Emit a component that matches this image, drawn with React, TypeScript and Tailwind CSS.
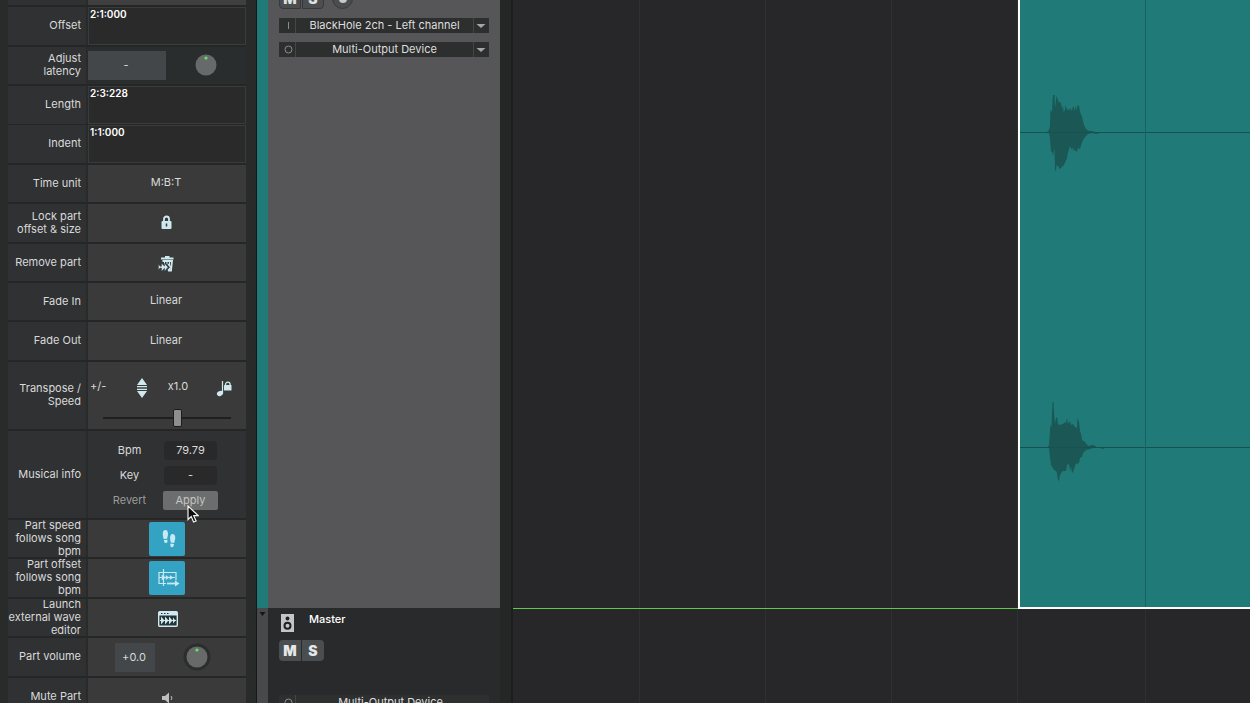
import { ReactNode, useState } from 'react';

const GRID_CELLS = [0, 1, 2, 3];

const CHANNEL_WAVES = [
  'M0 60 H27 L29 58 L30 54 L30.500 38 L32 40 L33 23 L34.500 23 L35 37 L36.500 24 L38 28 L39 31 L40 30 L41 31 L42 37 L43 34 L43.500 40 L45 38 L45.500 33 L47 38 L48 37 L49 39 L50 36 L52 39 L53 34 L54 36 L55 40 L55.500 34 L57 38 L57.500 33 L59 34 L60 40 L62 45 L64 53 L66 57 L69 59 L72 59 L75 60 L86 60 L86 61 L80 61 L76 62 L72 61 L68 62 L65 65 L62 70 L60 77 L58 76 L57 80 L55 78 L54 79 L53 75 L52 78 L50 74 L49 77 L48 80 L47 86 L44 93 L42 95 L40 97 L38 94 L36.500 93 L36 99 L35 98 L34.500 76 L33 84 L32 79 L31 80 L30 66 L29 61 Z',
  'M0 60 H28 L29 58 L30 44 L30.500 38 L31.500 40 L32 28 L32.500 15 L33.500 15 L34 26 L35 37 L36 31 L37 30 L38 37 L40 38 L43 37 L45 35 L46 36 L47 31 L48 37 L50 34 L51 38 L53 37 L55 40 L57 41 L57.500 31 L59 35 L60 44 L61 47 L62 53 L65 55 L68 59 L73 58 L77 60 L86 60 L83 62 L80 61 L73 61 L70 62 L66 63 L63 66 L62 70 L60 71 L59 76 L57 77 L56 76 L53 85 L52 86 L51 79 L50 84 L49 77 L47 78 L46 84 L43 84 L41 86 L40 88 L39 94 L38 93 L37 86 L36 84 L34 83 L31 78 L30 70 L29 61 Z',
];

function Row({ label, size, children }: { label: string; size: string; children: ReactNode }) {
  return (
    <div className={`grid grid-cols-[78px_1fr] gap-x-0.5 border-b-2 border-[#252626] ${size}`}>
      <div className="flex min-h-0 items-center justify-end bg-[#303133] pr-[5px] pb-px text-right leading-[13px]">
        {label}
      </div>
      {children}
    </div>
  );
}

function TimeField({ label, value }: { label: string; value: string }) {
  const [text, setText] = useState(value);
  return (
    <input
      aria-label={label}
      value={text}
      onChange={(e) => setText(e.target.value)}
      className="h-full w-full min-w-0 border border-[#3a3b3b] bg-[#2a2a2a] px-px pb-6 text-[10px] leading-3 font-semibold text-white outline-none"
    />
  );
}

function CellButton({ label, children }: { label: string; children: ReactNode }) {
  return (
    <button aria-label={label} className="flex items-center justify-center bg-[#3a3a3a] pr-0.5 pb-0.5">
      {children}
    </button>
  );
}

function Knob({ label, ring }: { label: string; ring: boolean }) {
  return (
    <button aria-label={label} className="size-7">
      <svg viewBox="0 0 28 28" className="size-7">
        {ring && <circle cx="14" cy="14" r="13.5" fill="#2c2d2d" />}
        <circle cx="14" cy="14" r="10.5" fill="#686a6a" />
        <circle cx="14" cy="7" r="1.6" fill="#62e36b" />
      </svg>
    </button>
  );
}

function DeviceSelect({ mark, device, faded }: { mark: 'I' | 'O'; device: string; faded?: boolean }) {
  return (
    <div
      className={`grid h-[15px] grid-cols-[17px_1fr_16px] items-center ${faded ? 'bg-[#2e2f2f]' : 'bg-[#2d2e2e]'}`}
    >
      <svg viewBox="0 0 17 15" className="h-[15px] w-[17px]" fill="none" stroke="#8b8c8c">
        {mark === 'I' ? <path d="M9.500 4v7" /> : <circle cx="9.500" cy="7.500" r="3.500" />}
        <path d="M16.500 0v15" stroke="#444545" />
      </svg>
      <select
        aria-label={mark === 'I' ? 'Input' : 'Output'}
        className={`h-[15px] w-full appearance-none text-center text-[11px] leading-[15px] text-[#dedede] outline-none [text-align-last:center] ${faded ? 'pl-3' : ''}`}
      >
        <option>{device}</option>
      </select>
      {!faded && (
        <svg viewBox="0 0 16 15" className="h-[15px] w-4">
          <path d="M.5 0v15" stroke="#444545" />
          <path d="M3.500 6h9l-4.500 4z" fill="#a5a6a6" />
        </svg>
      )}
    </div>
  );
}

function MuteSolo({ tone }: { tone: string }) {
  return (
    <div className="flex gap-px">
      <button aria-label="Mute" className={`h-[21px] w-[22px] rounded-l text-sm leading-[19px] font-black ${tone}`}>
        M
      </button>
      <button aria-label="Solo" className={`h-[21px] w-[22px] rounded-r text-sm leading-[19px] font-black ${tone}`}>
        S
      </button>
    </div>
  );
}

function Inspector() {
  const [speed, setSpeed] = useState(59);
  const [bpm, setBpm] = useState('79.79');
  const [key, setKey] = useState('-');

  return (
    <aside className="w-[257px] shrink-0 overflow-hidden border-r border-[#171818] pr-2.5 pl-2">
      <div className="grid h-[7px] grid-cols-[78px_1fr] gap-x-0.5 border-b-2 border-[#252626]">
        <div className="bg-[#303133]" />
        <div className="bg-[#3f3f3f]" />
      </div>

      <Row label="Offset" size="h-10">
        <TimeField label="Offset" value="2:1:000" />
      </Row>
      <Row label="Adjust latency" size="h-[39px]">
        <div className="grid grid-cols-[78px_1fr] items-center bg-[#2a2d2e] pb-px">
          <button aria-label="Latency" className="h-[29px] bg-[#43474a] pr-0.5">
            -
          </button>
          <div className="flex justify-center">
            <Knob label="Latency knob" ring={false} />
          </div>
        </div>
      </Row>
      <Row label="Length" size="h-[39px]">
        <TimeField label="Length" value="2:3:228" />
      </Row>
      <Row label="Indent" size="h-10">
        <TimeField label="Indent" value="1:1:000" />
      </Row>
      <Row label="Time unit" size="h-[39px]">
        <CellButton label="Time unit">M:B:T</CellButton>
      </Row>
      <Row label="Lock part offset & size" size="h-10">
        <CellButton label="Lock part">
          <svg viewBox="0 0 11 14" className="h-3.5 w-[11px]">
            <path d="M3 7V4a2.500 2.500 0 0 1 5 0v3" fill="none" stroke="#cfe9ee" strokeWidth="1.800" />
            <rect x=".5" y="6" width="10" height="8" rx="1" fill="#cfe9ee" />
            <path d="M5.500 8.500v3" stroke="#3a3a3a" strokeWidth="1.500" />
          </svg>
        </CellButton>
      </Row>
      <Row label="Remove part" size="h-[39px]">
        <CellButton label="Remove part">
          <svg viewBox="0 0 16 16" className="mt-1 size-4">
            <path d="M3 2.500h12.500M7 1h4.500" stroke="#cfe9ee" strokeWidth="2" />
            <path d="M4.500 5h9.500l-1 9.500h-3" fill="none" stroke="#cfe9ee" strokeWidth="1.800" />
            <path d="M6.500 5v3M9 5v3M11.500 5v4" stroke="#cfe9ee" />
            <path d="M.5 8v6l1.500-2h1.500v3.200l3-3v3l3.500-4-3.500-4v3l-3-3v3H2z" fill="#cfe9ee" stroke="#2c3234" strokeWidth=".4" />
            <path d="M10 8l3 3.200-3 3.200" fill="none" stroke="#cfe9ee" strokeWidth="1.500" />
          </svg>
        </CellButton>
      </Row>
      <Row label="Fade In" size="h-[39px]">
        <CellButton label="Fade In">Linear</CellButton>
      </Row>
      <Row label="Fade Out" size="h-10">
        <CellButton label="Fade Out">Linear</CellButton>
      </Row>

      <Row label="Transpose / Speed" size="h-[69px]">
        <div className="flex flex-col bg-[#3a3a3a] pt-3">
          <div className="grid h-6 grid-cols-[32px_44px_28px_1fr] items-center">
            <span className="pl-0.5">+/-</span>
            <button aria-label="Transpose steps" className="flex justify-center pt-1">
              <svg viewBox="0 0 10 20" className="h-5 w-2.5" fill="#cfe9ee">
                <path d="M5 0l5 7H0zM5 20l5-7H0z" />
                <path d="M0 8h10v1.200H0zM0 10.800h10v1.200H0z" />
              </svg>
            </button>
            <span className="text-center">x1.0</span>
            <button aria-label="Keep pitch" className="flex justify-end pt-1 pr-3.5">
              <svg viewBox="0 0 16 17" className="h-[17px] w-4">
                <path d="M6.500 1v12" stroke="#cfe9ee" strokeWidth="1.200" />
                <ellipse cx="4" cy="13.500" rx="3.200" ry="2.500" transform="rotate(-25 4 13.500)" fill="#cfe9ee" />
                <path d="M9.500 6V4.500a2.300 2.300 0 0 1 4.600 0V6" fill="none" stroke="#cfe9ee" strokeWidth="1.300" />
                <rect x="8" y="5" width="7.500" height="5.500" rx=".5" fill="#cfe9ee" />
              </svg>
            </button>
          </div>
          <input
            type="range"
            aria-label="Speed"
            value={speed}
            onChange={(e) => setSpeed(Number(e.target.value))}
            className="mx-auto mt-2.5 h-5 w-32 appearance-none bg-transparent [&::-webkit-slider-runnable-track]:h-0.5 [&::-webkit-slider-runnable-track]:bg-[#1f1f1f] [&::-webkit-slider-thumb]:-mt-2 [&::-webkit-slider-thumb]:h-[18px] [&::-webkit-slider-thumb]:w-[9px] [&::-webkit-slider-thumb]:appearance-none [&::-webkit-slider-thumb]:rounded-xs [&::-webkit-slider-thumb]:border [&::-webkit-slider-thumb]:border-[#1c1c1c] [&::-webkit-slider-thumb]:bg-[#8e8e8e]"
          />
        </div>
      </Row>

      <Row label="Musical info" size="h-[89px]">
        <div className="grid grid-cols-[55px_55px] content-center justify-center gap-x-1.5 gap-y-1.5 bg-[#303133] pt-0.5 pr-3.5 text-center leading-[19px]">
          <label htmlFor="bpm">Bpm</label>
          <input
            id="bpm"
            value={bpm}
            onChange={(e) => setBpm(e.target.value)}
            className="mx-auto h-[19px] w-[53px] rounded-sm bg-[#29292a] text-center outline-none"
          />
          <label htmlFor="key">Key</label>
          <input
            id="key"
            value={key}
            onChange={(e) => setKey(e.target.value)}
            className="mx-auto h-[19px] w-[53px] rounded-sm bg-[#29292a] text-center outline-none"
          />
          <button className="text-[#9a9b9b]">Revert</button>
          <div className="relative">
            <button className="h-[19px] w-full rounded-xs bg-[#6c6d6d] text-[#c4c4c4]">Apply</button>
            {/* Pointer */}
            <svg viewBox="0 0 12 18" className="pointer-events-none absolute top-3.5 left-6 h-[18px] w-3">
              <path
                d="M1 1v13.500l3.200-3 2.400 5.500 2.500-1-2.400-5.300h4.600z"
                fill="#0b0b0b"
                stroke="#f2f2f2"
                strokeWidth="1.200"
              />
            </svg>
          </div>
        </div>
      </Row>

      <Row label="Part speed follows song bpm" size="h-[39px]">
        <div className="flex items-center justify-center bg-[#3a3a3a]">
          <button aria-label="Part speed follows song" className="flex h-[34px] w-9 items-center justify-center rounded-xs bg-[#34a2c2] pl-1">
            <svg viewBox="0 0 14 18" className="h-[18px] w-3.5" fill="#c6e9f2">
              <path d="M3.500 0C1.300 0 .6 2 .8 4.500c.1 2 .6 3 .8 4.500l3.600-.3c0-1.500.8-2.500.8-4.700C6 1.500 5.200 0 3.500 0zM1.900 10l3.500-.3c.4 2-.1 3.300-1.400 3.400-1.300.1-2-1-2.100-3.100z" />
              <path d="M10.700 4c2.200.2 2.800 2.200 2.500 4.700-.3 2-.8 3-1 4.300l-3.600-.5c.1-1.500-.6-2.500-.5-4.700C8.200 5.400 9 3.900 10.700 4zM8.400 13.500l3.600.5c-.2 2.300-.9 3.500-2.200 3.300-1.300-.1-1.700-1.500-1.400-3.800z" />
            </svg>
          </button>
        </div>
      </Row>
      <Row label="Part offset follows song bpm" size="h-10">
        <div className="flex items-center justify-center bg-[#3a3a3a]">
          <button aria-label="Part offset follows song" className="flex h-[34px] w-9 items-center justify-center rounded-xs bg-[#34a2c2] pl-1">
            <svg viewBox="0 0 22 18" className="h-[18px] w-[22px]" fill="none" stroke="#c6e9f2">
              <path d="M5.500 0v17M1 3.500h17v8M1 3v11.500h7" strokeWidth="1.200" />
              <path d="M1 8.500h16" />
              <path d="M4 6l3.500 2.500L4 11zM8 6.500l3 2-3 2zM12 6.500l3 2-3 2z" fill="#c6e9f2" strokeWidth=".5" />
              <path d="M9 14.500h9" strokeWidth="1.800" />
              <path d="M17 11.500l4.500 3-4.500 3z" fill="#c6e9f2" stroke="none" />
            </svg>
          </button>
        </div>
      </Row>
      <Row label="Launch external wave editor" size="h-[39px]">
        <CellButton label="Launch editor">
          <svg viewBox="0 0 20 16" className="mt-1 ml-1 h-4 w-5">
            <rect x=".7" y=".7" width="18.600" height="14.600" rx="1" fill="#253236" stroke="#cfe9ee" strokeWidth="1.400" />
            <path d="M1 1h18v3.500H1z" fill="#cfe9ee" />
            <path d="M3 2.500h1.500M6 2.500h1.500M9 2.500h1.500" stroke="#253236" strokeWidth="1.200" />
            <path d="M2 9.500h16" stroke="#cfe9ee" />
            <path d="M3 5.500v8l3.500-4zM7 5.500v8l3.500-4zM11 5.500v8l3.500-4zM15 6.500v6l2.500-3z" fill="#cfe9ee" />
          </svg>
        </CellButton>
      </Row>
      <Row label="Part volume" size="h-10">
        <div className="flex items-center gap-7 bg-[#3a3a3a] pl-[27px]">
          <button aria-label="Part volume" className="h-[29px] w-10 bg-[#43474a] pr-0.5">
            +0.0
          </button>
          <Knob label="Part volume knob" ring />
        </div>
      </Row>
      <Row label="Mute Part" size="h-10">
        <CellButton label="Mute Part">
          <svg viewBox="0 0 12 12" className="mt-1 ml-1 size-3">
            <path d="M0 4h3l4-3.500v11L3 8H0z" fill="#bdbebe" />
            <path d="M9 4q2 2 0 4" fill="none" stroke="#bdbebe" />
          </svg>
        </CellButton>
      </Row>
    </aside>
  );
}

function TrackHeaders() {
  return (
    <section className="flex w-[243px] shrink-0 flex-col">
      <div className="flex h-[608px] shrink-0 overflow-hidden">
        <div className="w-[11px] bg-[#207a77]" />
        <div className="flex flex-1 flex-col gap-[9px] bg-[#565658] px-[11px]">
          <div className="-mt-3 flex gap-2">
            <MuteSolo tone="border border-[#38393a] bg-[#4b4d4f] text-[#dfe0e0]" />
            <button aria-label="Record" className="flex size-[21px] items-center justify-center rounded-full border border-[#38393a] bg-[#4b4c4d]">
              <span className="size-2 rounded-full bg-[#c9caca]" />
            </button>
          </div>
          <DeviceSelect mark="I" device="BlackHole 2ch - Left channel" />
          <DeviceSelect mark="O" device="Multi-Output Device" />
        </div>
      </div>

      {/* Master */}
      <div className="flex flex-1 overflow-hidden">
        <div className="w-[11px] bg-[#48494a] pt-1">
          <svg viewBox="0 0 11 5" className="h-[5px] w-[11px]">
            <path d="M2.500 0h6l-3 4z" fill="#151515" />
          </svg>
        </div>
        <div className="flex flex-1 flex-col bg-[#292a2b] px-[11px] pt-1">
          <div className="flex h-7 shrink-0 gap-[15px] pl-0.5">
            <svg viewBox="0 0 13 18" className="mt-0.5 h-[18px] w-[13px]">
              <rect width="13" height="18" fill="#c4c5c5" />
              <circle cx="6.500" cy="4.500" r="1.900" fill="#1f2021" />
              <circle cx="6.500" cy="11.800" r="3" fill="none" stroke="#1f2021" strokeWidth="2" />
            </svg>
            <span className="text-[11px] leading-[15px] font-medium text-white">Master</span>
          </div>
          <MuteSolo tone="bg-[#4b4e50] text-[#e6e8e8]" />
          <div className="mt-[34px] shrink-0">
            <DeviceSelect mark="O" device="Multi-Output Device" faded />
          </div>
        </div>
      </div>
    </section>
  );
}

function Channel({ wave }: { wave: string }) {
  return (
    <div className="flex h-[315px] items-center">
      <svg viewBox="0 0 125 121" className="h-[121px] w-[125px] shrink-0">
        <path d={wave} fill="#1a5755" />
        <path d="M0 60.500h125" stroke="#175250" />
      </svg>
      <div className="h-px flex-1 bg-[#175250]" />
    </div>
  );
}

function Timeline() {
  return (
    <main className="flex min-w-0 flex-1 flex-col border-l-2 border-[#1c1d1d] bg-[#272729]">
      <div className="flex h-[609px] shrink-0">
        <div className="flex border-b border-[#5fc94f] pl-px">
          {GRID_CELLS.map((i) => (
            <div key={i} className="w-[126px] border-r border-[#2f3031]" />
          ))}
        </div>
        {/* Audio part */}
        <div className="relative flex-1 overflow-hidden border-b-2 border-l-2 border-white bg-[#207a77]">
          <div className="-mt-[25px]">
            {CHANNEL_WAVES.map((wave) => (
              <Channel key={wave} wave={wave} />
            ))}
          </div>
          <div className="absolute inset-y-0 left-[125px] w-px bg-[#1b615f]" />
        </div>
      </div>
      <div className="flex flex-1 overflow-hidden pl-px">
        {GRID_CELLS.map((i) => (
          <div key={i} className="w-[126px] border-r border-[#2f3031]" />
        ))}
        <div className="w-32 border-r border-[#2f3031]" />
      </div>
    </main>
  );
}

export default function App() {
  return (
    <div className="flex h-screen overflow-hidden bg-[#292a2a] font-['Inter',sans-serif] text-[11px] text-[#d9dada]">
      <Inspector />
      <TrackHeaders />
      <div className="w-[11px] shrink-0 bg-[#252626]" />
      <Timeline />
    </div>
  );
}
